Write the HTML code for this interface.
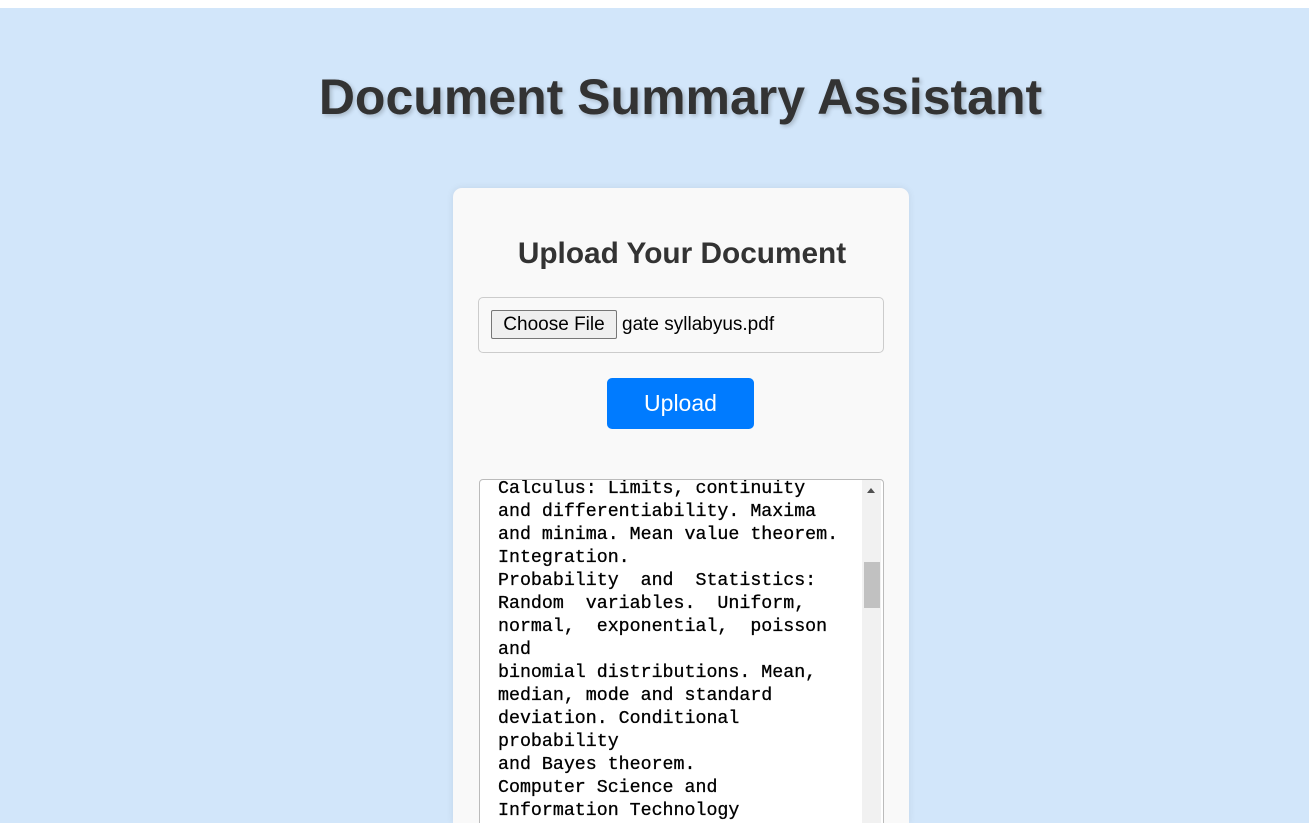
<!DOCTYPE html>
<html><head><style>
html,body{margin:0;width:1309px;height:823px;overflow:hidden}
body{background:#d2e6fa;font-family:"Liberation Sans",Arial,sans-serif;position:relative}
.top{position:absolute;left:0;top:0;width:1309px;height:8px;background:#fff}
h1{position:absolute;left:0;width:1309px;top:67px;margin:0;text-align:center;font-size:50px;line-height:60px;color:#333;text-shadow:2px 2px 4px rgba(0,0,0,.2);padding-left:52px;box-sizing:border-box}
.card{position:absolute;left:453px;top:188px;width:456px;height:635px;background:#f9f9f9;border-radius:9px 9px 0 0;box-shadow:0 0 8px rgba(0,0,0,.08)}
h2{position:absolute;left:453px;width:456px;top:236px;margin:0;text-align:center;font-size:29.8px;line-height:36px;color:#333;padding-left:2px;box-sizing:border-box}
.file{position:absolute;left:478px;top:297px;width:404px;height:54px;border:1px solid #ccc;border-radius:5px;background:#f9f9f9}
.btnf{position:absolute;left:491px;top:310px;width:126px;height:29px;border:1px solid #767676;border-radius:2px;background:#efefef;font-size:19px;line-height:28px;text-align:center;color:#000;box-sizing:border-box}
.fname{position:absolute;left:622px;top:312px;font-size:19px;line-height:26px;color:#000}
.up{position:absolute;left:607px;top:378px;width:147px;height:51px;background:#007bff;border-radius:5px;color:#fff;font-size:23px;line-height:51px;text-align:center}
.ta{position:absolute;left:479px;top:479px;width:403px;height:360px;border:1px solid #bbb;border-radius:4px;background:#fff;overflow:hidden}
.txt{position:absolute;left:18px;top:-2px;font-family:"Liberation Mono","DejaVu Sans Mono",monospace;font-size:18.3px;line-height:23px;white-space:pre;color:#000;-webkit-text-stroke:0.3px #000}
.sb{position:absolute;left:382px;top:0;width:19px;height:360px;background:#f1f1f1}
.th{position:absolute;left:2px;top:82px;width:16px;height:46px;background:#c1c1c1}
.ar{position:absolute;left:5px;top:8px;width:0;height:0;border-left:4px solid transparent;border-right:4px solid transparent;border-bottom:5px solid #505050}
</style></head><body>
<div class="top"></div>
<h1>Document Summary Assistant</h1>
<div class="card"></div>
<h2>Upload Your Document</h2>
<div class="file"></div>
<div class="btnf">Choose File</div>
<div class="fname">gate syllabyus.pdf</div>
<div class="up">Upload</div>
<div class="ta"><div class="txt">Calculus: Limits, continuity
and differentiability. Maxima
and minima. Mean value theorem.
Integration.
Probability  and  Statistics:
Random  variables.  Uniform,
normal,  exponential,  poisson
and
binomial distributions. Mean,
median, mode and standard
deviation. Conditional
probability
and Bayes theorem.
Computer Science and
Information Technology</div>
<div class="sb"><div class="ar"></div><div class="th"></div></div></div>
</body></html>
